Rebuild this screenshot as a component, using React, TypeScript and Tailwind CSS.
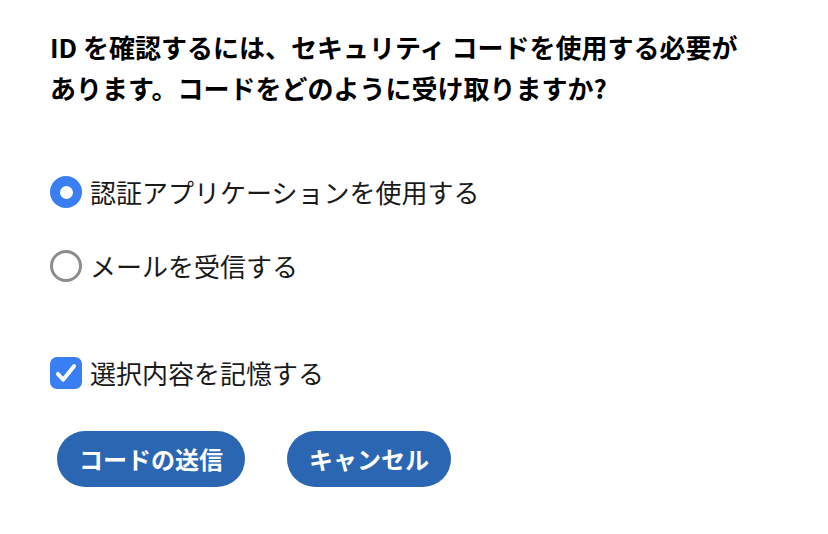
import React, { useState } from 'react';

const font = { fontFamily: '"Noto Sans CJK JP", "Noto Sans", sans-serif' };

function Radio({ checked }: { checked: boolean }) {
  return checked ? (
    <span className="flex h-[32px] w-[32px] shrink-0 items-center justify-center rounded-full bg-[#3a7ef3]">
      <span className="h-[13px] w-[13px] rounded-full bg-white" />
    </span>
  ) : (
    <span className="h-[32px] w-[32px] shrink-0 rounded-full border-[3px] border-[#8c8c8c] bg-white" />
  );
}

export default function App() {
  const [method, setMethod] = useState<'app' | 'mail'>('app');
  const [remember, setRemember] = useState(true);

  return (
    <div className="min-h-[534px] w-[828px] bg-white pl-[50px] pt-[26px] text-[#111]" style={font}>
      <h1 className="text-[26px] font-bold leading-[41px] text-black">
        ID を確認するには、セキュリティ コードを使用する必要が
        <br />
        あります。コードをどのように受け取りますか?
      </h1>

      <div className="mt-[68px] flex flex-col gap-[44px]">
        <button type="button" onClick={() => setMethod('app')} className="flex items-center gap-[8px] text-left">
          <Radio checked={method === 'app'} />
          <span className="text-[26px] leading-[32px] text-[#1a1a1a]">認証アプリケーションを使用する</span>
        </button>
        <button type="button" onClick={() => setMethod('mail')} className="-mt-[2px] flex items-center gap-[8px] text-left">
          <Radio checked={method === 'mail'} />
          <span className="text-[26px] leading-[32px] text-[#1a1a1a]">メールを受信する</span>
        </button>
      </div>

      <button type="button" onClick={() => setRemember(!remember)} className="mt-[75px] flex items-center gap-[8px]">
        {remember ? (
          <span className="flex h-[32px] w-[32px] shrink-0 items-center justify-center rounded-[7px] bg-[#3a7ef3]">
            <svg width="26" height="26" viewBox="0 0 24 24" fill="none" stroke="white" strokeWidth="3.6" strokeLinecap="round" strokeLinejoin="round">
              <path d="M4.5 12.8l4.9 5.4L19.5 5.5" />
            </svg>
          </span>
        ) : (
          <span className="h-[32px] w-[32px] shrink-0 rounded-[7px] border-[3px] border-[#8c8c8c]" />
        )}
        <span className="text-[26px] leading-[32px] text-[#1a1a1a]">選択内容を記憶する</span>
      </button>

      <div className="mt-[42px] flex items-center gap-[42px] pl-[7px]">
        <button type="button" className="h-[56px] rounded-full bg-[#2b66b3] px-[22px] text-[24px] font-bold text-white">
          コードの送信
        </button>
        <button type="button" className="h-[56px] rounded-full bg-[#2b66b3] px-[22px] text-[24px] font-bold text-white">
          キャンセル
        </button>
      </div>
    </div>
  );
}
